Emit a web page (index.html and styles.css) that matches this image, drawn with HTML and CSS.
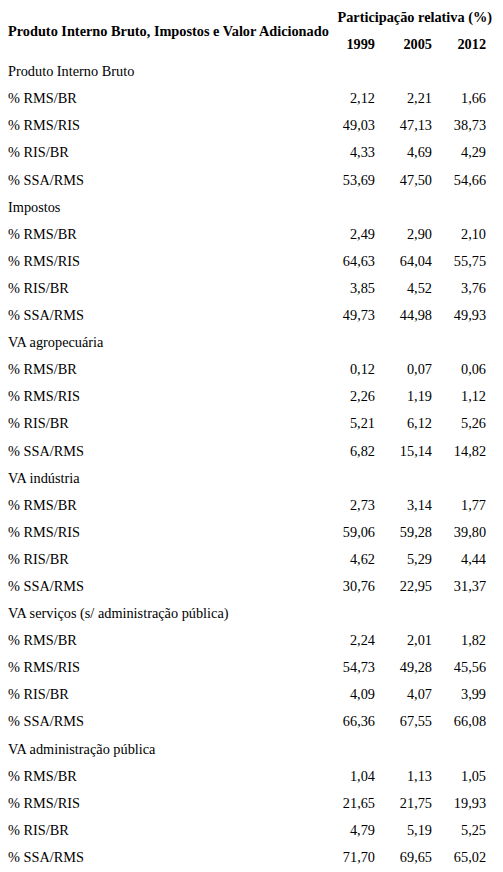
FILE: index.html
```html
<!DOCTYPE html>
<html lang="pt">
<head>
  <meta charset="utf-8" />
  <meta name="viewport" content="width=device-width, initial-scale=1.0" />
  <title>Participação relativa</title>
  <link rel="stylesheet" href="styles.css">
</head>
<body>

  <table class="data-table">
    <colgroup>
      <col class="col-label">
      <col class="col-num">
      <col class="col-num">
      <col class="col-last">
    </colgroup>
    <thead>
      <tr>
        <th class="title" rowspan="2">Produto Interno Bruto, Impostos e Valor Adicionado</th>
        <th class="group" colspan="3">Participação relativa (%)</th>
      </tr>
      <tr>
        <th class="num">1999</th>
        <th class="num">2005</th>
        <th class="num">2012</th>
      </tr>
    </thead>
    <tbody>
      <tr class="section"><td colspan="4">Produto Interno Bruto</td></tr>
      <tr><td>% RMS/BR</td><td class="num">2,12</td><td class="num">2,21</td><td class="num">1,66</td></tr>
      <tr><td>% RMS/RIS</td><td class="num">49,03</td><td class="num">47,13</td><td class="num">38,73</td></tr>
      <tr><td>% RIS/BR</td><td class="num">4,33</td><td class="num">4,69</td><td class="num">4,29</td></tr>
      <tr><td>% SSA/RMS</td><td class="num">53,69</td><td class="num">47,50</td><td class="num">54,66</td></tr>

      <tr class="section"><td colspan="4">Impostos</td></tr>
      <tr><td>% RMS/BR</td><td class="num">2,49</td><td class="num">2,90</td><td class="num">2,10</td></tr>
      <tr><td>% RMS/RIS</td><td class="num">64,63</td><td class="num">64,04</td><td class="num">55,75</td></tr>
      <tr><td>% RIS/BR</td><td class="num">3,85</td><td class="num">4,52</td><td class="num">3,76</td></tr>
      <tr><td>% SSA/RMS</td><td class="num">49,73</td><td class="num">44,98</td><td class="num">49,93</td></tr>

      <tr class="section"><td colspan="4">VA agropecuária</td></tr>
      <tr><td>% RMS/BR</td><td class="num">0,12</td><td class="num">0,07</td><td class="num">0,06</td></tr>
      <tr><td>% RMS/RIS</td><td class="num">2,26</td><td class="num">1,19</td><td class="num">1,12</td></tr>
      <tr><td>% RIS/BR</td><td class="num">5,21</td><td class="num">6,12</td><td class="num">5,26</td></tr>
      <tr><td>% SSA/RMS</td><td class="num">6,82</td><td class="num">15,14</td><td class="num">14,82</td></tr>

      <tr class="section"><td colspan="4">VA indústria</td></tr>
      <tr><td>% RMS/BR</td><td class="num">2,73</td><td class="num">3,14</td><td class="num">1,77</td></tr>
      <tr><td>% RMS/RIS</td><td class="num">59,06</td><td class="num">59,28</td><td class="num">39,80</td></tr>
      <tr><td>% RIS/BR</td><td class="num">4,62</td><td class="num">5,29</td><td class="num">4,44</td></tr>
      <tr><td>% SSA/RMS</td><td class="num">30,76</td><td class="num">22,95</td><td class="num">31,37</td></tr>

      <tr class="section"><td colspan="4">VA serviços (s/ administração pública)</td></tr>
      <tr><td>% RMS/BR</td><td class="num">2,24</td><td class="num">2,01</td><td class="num">1,82</td></tr>
      <tr><td>% RMS/RIS</td><td class="num">54,73</td><td class="num">49,28</td><td class="num">45,56</td></tr>
      <tr><td>% RIS/BR</td><td class="num">4,09</td><td class="num">4,07</td><td class="num">3,99</td></tr>
      <tr><td>% SSA/RMS</td><td class="num">66,36</td><td class="num">67,55</td><td class="num">66,08</td></tr>

      <tr class="section"><td colspan="4">VA administração pública</td></tr>
      <tr><td>% RMS/BR</td><td class="num">1,04</td><td class="num">1,13</td><td class="num">1,05</td></tr>
      <tr><td>% RMS/RIS</td><td class="num">21,65</td><td class="num">21,75</td><td class="num">19,93</td></tr>
      <tr><td>% RIS/BR</td><td class="num">4,79</td><td class="num">5,19</td><td class="num">5,25</td></tr>
      <tr><td>% SSA/RMS</td><td class="num">71,70</td><td class="num">69,65</td><td class="num">65,02</td></tr>
    </tbody>
  </table>

</body>
</html>
```
FILE: styles.css
```css
body {
  margin: 4px 8px 8px;
  font-family: "Liberation Serif", "Times New Roman", serif;
  font-size: 14.3px;
  background: #fff;
  color: #000;
}

.data-table {
  width: 487px;
  border-collapse: collapse;
  table-layout: fixed;
}

.col-label {
  width: 312px;
}

.col-num {
  width: 56px;
}

.col-last {
  width: 63px;
}

.data-table th,
.data-table td {
  padding: 0;
  line-height: 27.1px;
  white-space: nowrap;
}

.data-table th {
  font-weight: bold;
}

.data-table .title {
  text-align: left;
  vertical-align: middle;
}

.data-table .group {
  text-align: right;
  padding-right: 3px;
}

.data-table .num {
  text-align: right;
}

/* first figure column */
.data-table td.num:nth-child(2),
.data-table th.num:nth-child(1) {
  padding-right: 1px;
}

/* last figure column */
.data-table td.num:nth-child(4),
.data-table th.num:nth-child(3) {
  padding-right: 9px;
}

.section td {
  text-align: left;
}
```
